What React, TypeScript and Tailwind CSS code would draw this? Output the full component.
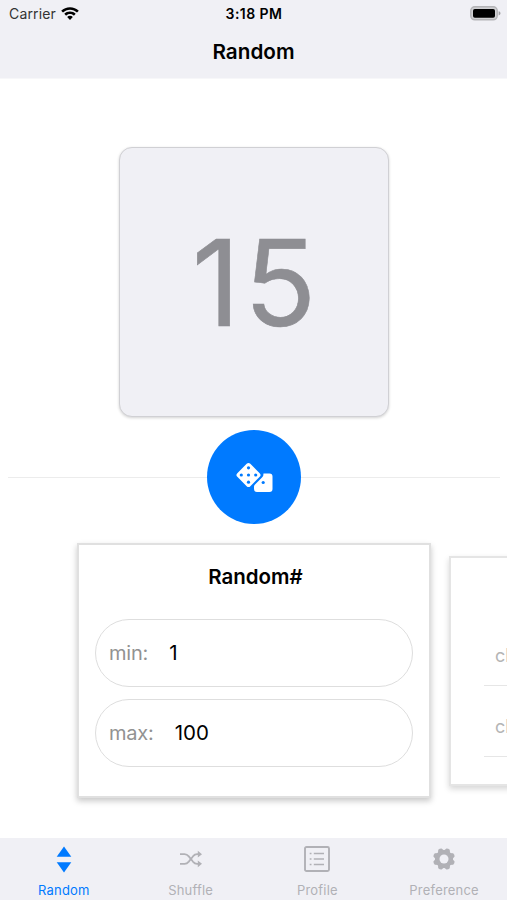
import React, { useState } from 'react';

const WifiIcon = () => (
  <svg width="18" height="14" viewBox="0 0 18 14" fill="#000">
    <path d="M9 0.200C5.600 0.200 2.500 1.500 0.200 3.700L2 5.600C3.800 3.900 6.300 2.800 9 2.800s5.200 1.100 7 2.800l1.800-1.900C15.500 1.500 12.400 0.200 9 0.200z" />
    <path d="M9 4.500c-2.200 0-4.200 0.900-5.700 2.300l1.800 1.900C6.100 7.700 7.500 7.100 9 7.100s2.900 0.600 3.900 1.600l1.800-1.900C13.200 5.400 11.200 4.500 9 4.500z" />
    <path d="M9 8.800c-1.100 0-2.100 0.400-2.800 1.100L9 13l2.800-3.100C11.100 9.200 10.100 8.800 9 8.800z" />
  </svg>
);

const BatteryIcon = () => (
  <svg width="31" height="15" viewBox="0 0 31 15">
    <rect x="0.8" y="0.8" width="26.400" height="13" rx="4" fill="#d0d0d3" stroke="#b4b4b7" strokeWidth="1.500" />
    <rect x="3" y="2.900" width="22" height="8.900" rx="1.800" fill="#000" />
    <path d="M28.600 5.200c1.300 0.400 1.900 1.200 1.900 2.100s-0.600 1.700-1.900 2.100z" fill="#a0a0a3" />
  </svg>
);

const DiceIcon = () => (
  <svg width="38" height="32" viewBox="0 0 38 32">
    <path
      d="M28.500 12.500H34.500Q37.500 12.500 37.500 15.500V28Q37.500 31 34.500 31H22Q19 31 19 28V25.500Q19 24.500 20 23.500L27 16.500Q28.700 14.800 28.500 12.500z"
      fill="#fff"
    />
    <rect x="4.300" y="4.800" width="18.400" height="18.400" rx="2.600" transform="rotate(45 13.500 14)" fill="#fff" />
    <g fill="#007aff">
      <circle cx="13.500" cy="6.800" r="1.600" />
      <circle cx="6.300" cy="14" r="1.600" />
      <circle cx="13.500" cy="14" r="1.600" />
      <circle cx="20.700" cy="14" r="1.600" />
      <circle cx="13.500" cy="21.200" r="1.600" />
      <circle cx="28.200" cy="21.500" r="1.600" />
    </g>
  </svg>
);

const RandomIcon = () => (
  <svg width="16" height="27" viewBox="0 0 16 27" fill="currentColor">
    <path d="M8 0.500L15.300 10.700H0.700z" />
    <path d="M8 26.500L15.300 16.300H0.700z" />
  </svg>
);

const ShuffleIcon = () => (
  <svg width="24" height="18" viewBox="0 0 24 18" fill="none" stroke="currentColor" strokeWidth="1.800">
    <path d="M1 4.200h4.500c2 0 3.200 0.900 4.300 2.200l4.300 5.400c1.100 1.300 2.200 2 4 2h1.500" />
    <path d="M1 13.800h4.500c2 0 3.200-0.900 4.300-2.200l4.300-5.400c1.100-1.300 2.200-2 4-2h1.500" />
    <path d="M18.800 0.800L23 4.200l-4.200 3.400zM18.800 10.400L23 13.800l-4.200 3.400z" fill="currentColor" stroke="none" />
  </svg>
);

const ProfileIcon = () => (
  <svg width="26" height="26" viewBox="0 0 26 26" fill="none" stroke="currentColor" strokeWidth="1.900">
    <rect x="1" y="1" width="24" height="24" rx="1.500" />
    <path d="M9.800 7.500H20M9.800 13H20M9.800 18.500H20" strokeWidth="1.700" />
    <path d="M5.700 7.500H7.500M5.700 13H7.500M5.700 18.500H7.500" strokeWidth="1.700" />
  </svg>
);

const GearIcon = () => (
  <svg width="22" height="22" viewBox="0 0 22 22">
    <g fill="currentColor">
      <circle cx="11" cy="11" r="9" />
      {[22.5, 67.5, 112.5, 157.5, 202.5, 247.5, 292.5, 337.5].map((angle) => (
        <path key={angle} d="M7.300 4L9.200 0.300Q11 -0.500 12.800 0.300L14.700 4z" transform={`rotate(${angle} 11 11)`} />
      ))}
    </g>
    <circle cx="11" cy="11" r="4.500" fill="#f0f0f5" />
  </svg>
);

const tabs = [
  { name: 'Random', icon: <RandomIcon /> },
  { name: 'Shuffle', icon: <ShuffleIcon /> },
  { name: 'Profile', icon: <ProfileIcon /> },
  { name: 'Preference', icon: <GearIcon /> },
];

interface RangeInputProps {
  label: string;
  value: string;
  onChange: (value: string) => void;
}

const RangeInput: React.FC<RangeInputProps> = ({ label, value, onChange }) => (
  <label className="flex h-[68px] items-center gap-[21px] rounded-full border border-[#dedede] px-[13px] text-[20px]">
    <span className="tracking-[-0.2px] text-[#929292]">{label}</span>
    <input
      value={value}
      onChange={(e) => onChange(e.target.value)}
      className="w-40 bg-transparent pt-px text-[20.5px] text-black outline-none"
    />
  </label>
);

const App: React.FC = () => {
  const [activeTab, setActiveTab] = useState('Random');
  const [min, setMin] = useState('1');
  const [max, setMax] = useState('100');
  const [result, setResult] = useState(15);

  const roll = () => {
    const low = Number(min);
    const high = Number(max);
    setResult(Math.floor(Math.random() * (high - low + 1)) + low);
  };

  return (
    <div className="flex h-[900px] w-[507px] flex-col overflow-hidden bg-white font-['Inter',sans-serif] text-black">
      <header className="h-[79px] shrink-0 border-b border-[#f7f7f9] bg-[#f0f0f5]">
        <div className="grid h-[27px] grid-cols-3 items-center pl-[9px] pr-[6px] text-[14px]">
          <div className="flex items-center gap-[5px] tracking-[0.15px] text-[#333]">
            <span>Carrier</span>
            <WifiIcon />
          </div>
          <span className="pr-[2px] text-center text-[14px] font-semibold tracking-[0.45px]">3:18 PM</span>
          <div className="flex justify-end">
            <BatteryIcon />
          </div>
        </div>
        <h1 className="mt-[10px] text-center text-[20.7px] font-semibold leading-[30px]">Random</h1>
      </header>

      <main className="flex min-h-0 flex-1 flex-col pt-[68px]">
        <div className="ml-[119px] flex h-[270px] w-[270px] shrink-0 items-center justify-center rounded-[13px] border border-[#d0d0d4] bg-[#f0f0f5] shadow-[0_1px_3px_rgba(0,0,0,0.18)]">
          <span className="pl-[4px] pt-[2px] text-[119px] leading-none tracking-[4px] text-[#8e8e93] [-webkit-text-stroke:0.6px_#8e8e93]">
            {result}
          </span>
        </div>

        <div className="ml-2 mr-[7px] mt-[13px] flex shrink-0 items-center">
          <div className="h-px flex-1 bg-[#ececec]" />
          <button onClick={roll} className="flex size-[94px] items-center justify-center rounded-full bg-[#007aff]">
            <DiceIcon />
          </button>
          <div className="h-px flex-1 bg-[#ececec]" />
        </div>

        <div className="mt-[19px] flex items-center gap-[18px] pl-[77px]">
          <section className="h-[255px] w-[354px] shrink-0 border-2 border-[#e0e0e0] bg-white px-4 shadow-[0_3px_6px_rgba(0,0,0,0.22)]">
            <h2 className="pl-[3px] pt-[17px] text-center text-[20.5px] font-semibold leading-[30px]">Random#</h2>
            <div className="mt-[27px] flex flex-col gap-3">
              <RangeInput label="min:" value={min} onChange={setMin} />
              <RangeInput label="max:" value={max} onChange={setMax} />
            </div>
          </section>
          <section className="h-[230px] w-[320px] shrink-0 border-2 border-[#e5e5e5] bg-white pl-[33px] pt-[58px] text-[18px] text-[#b5b5b5] shadow-[0_3px_6px_rgba(0,0,0,0.16)]">
            <div className="flex h-[70px] items-center border-b border-[#e6e6e6] pl-[11px] pt-[11px]">choice</div>
            <div className="flex h-[71px] items-center border-b border-[#e6e6e6] pl-[11px] pt-[11px]">choice</div>
          </section>
        </div>
      </main>

      <nav className="grid h-[62px] shrink-0 grid-cols-4 bg-[#f0f0f5]">
        {tabs.map((tab) => (
          <button
            key={tab.name}
            onClick={() => setActiveTab(tab.name)}
            className={`flex flex-col items-center pl-px text-[13px] tracking-[0.2px] ${
              activeTab === tab.name ? 'text-[#007aff]' : 'text-[#b1b1b6]'
            }`}
          >
            <span className="flex h-[42px] items-center">{tab.icon}</span>
            <span className="leading-5">{tab.name}</span>
          </button>
        ))}
      </nav>
    </div>
  );
};

export default App;
